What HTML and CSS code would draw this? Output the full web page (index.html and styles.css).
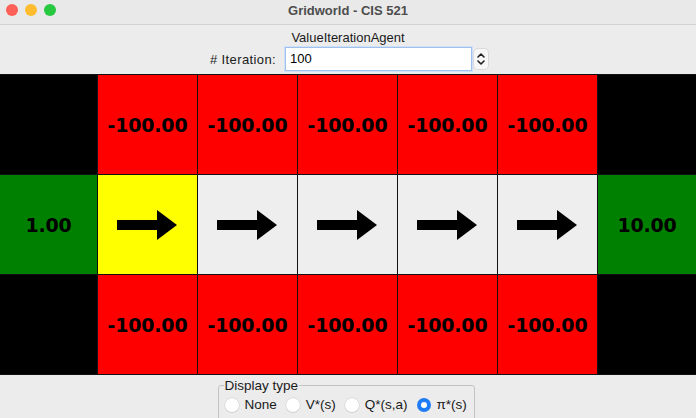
FILE: index.html
```html
<!DOCTYPE html>
<html>
<head>
<meta charset="utf-8">
<link rel="stylesheet" href="styles.css">
</head>
<body>
<div class="window">
  <div class="titlebar">
    <div class="lights">
      <span class="light red"></span>
      <span class="light yellow"></span>
      <span class="light green"></span>
    </div>
    <div class="title">Gridworld - CIS 521</div>
  </div>
  <div class="header">
    <div class="agent">ValueIterationAgent</div>
    <div class="iter-row">
      <label class="iter-label"># Iteration:</label>
      <div class="iter-input">100</div>
      <div class="spinner">
        <svg width="14" height="20" viewBox="0 0 14 20">
          <path d="M4 8 L7 5 L10 8" fill="none" stroke="#222" stroke-width="1.6" stroke-linecap="round" stroke-linejoin="round"/>
          <path d="M4 12 L7 15 L10 12" fill="none" stroke="#222" stroke-width="1.6" stroke-linecap="round" stroke-linejoin="round"/>
        </svg>
      </div>
    </div>
  </div>
  <div class="grid">
    <div class="cell black first"></div>
    <div class="cell red">-100.00</div>
    <div class="cell red">-100.00</div>
    <div class="cell red">-100.00</div>
    <div class="cell red">-100.00</div>
    <div class="cell red">-100.00</div>
    <div class="cell black"></div>

    <div class="cell green first">1.00</div>
    <div class="cell yellow"><svg class="arrow" width="60" height="30" viewBox="0 0 60 30"><path d="M0 10 H40 V0 L60 15 L40 30 V20 H0 Z" fill="#000"/></svg></div>
    <div class="cell grey"><svg class="arrow" width="60" height="30" viewBox="0 0 60 30"><path d="M0 10 H40 V0 L60 15 L40 30 V20 H0 Z" fill="#000"/></svg></div>
    <div class="cell grey"><svg class="arrow" width="60" height="30" viewBox="0 0 60 30"><path d="M0 10 H40 V0 L60 15 L40 30 V20 H0 Z" fill="#000"/></svg></div>
    <div class="cell grey"><svg class="arrow" width="60" height="30" viewBox="0 0 60 30"><path d="M0 10 H40 V0 L60 15 L40 30 V20 H0 Z" fill="#000"/></svg></div>
    <div class="cell grey"><svg class="arrow" width="60" height="30" viewBox="0 0 60 30"><path d="M0 10 H40 V0 L60 15 L40 30 V20 H0 Z" fill="#000"/></svg></div>
    <div class="cell green">10.00</div>

    <div class="cell black first"></div>
    <div class="cell red">-100.00</div>
    <div class="cell red">-100.00</div>
    <div class="cell red">-100.00</div>
    <div class="cell red">-100.00</div>
    <div class="cell red">-100.00</div>
    <div class="cell black"></div>
  </div>
  <div class="footer">
    <fieldset class="display">
      <legend>Display type</legend>
      <div class="radios">
        <span class="radio"><span class="dot"></span>None</span>
        <span class="radio"><span class="dot"></span>V*(s)</span>
        <span class="radio"><span class="dot"></span>Q*(s,a)</span>
        <span class="radio"><span class="dot on"></span>π*(s)</span>
      </div>
    </fieldset>
  </div>
</div>
</body>
</html>
```
FILE: styles.css
```css
* { box-sizing: border-box; }
html, body { margin: 0; padding: 0; }
body {
  width: 696px;
  height: 418px;
  overflow: hidden;
  background: #ececec;
  font-family: "Liberation Sans", Arial, sans-serif;
  color: #000;
}
.window { width: 696px; height: 418px; display: flex; flex-direction: column; }
.window > * { flex-shrink: 0; }
.titlebar {
  height: 25px;
  position: relative;
  background: #e9e9e9;
  border-bottom: 1px solid #d2d2d2;
  display: flex;
  align-items: center;
  justify-content: center;
}
.lights {
  position: absolute;
  left: 6px;
  top: 4px;
  display: flex;
  gap: 7px;
}
.light { width: 12px; height: 12px; border-radius: 50%; display: block; }
.light.red { background: #fe5f57; }
.light.yellow { background: #febc2e; }
.light.green { background: #28c840; }
.title {
  font-weight: bold;
  font-size: 13px;
  color: #4d4d4d;
  margin-top: -3px;
}
.header {
  height: 49px;
  display: flex;
  flex-direction: column;
  align-items: center;
}
.agent {
  font-size: 13px;
  margin-top: 4px;
  height: 17px;
  line-height: 17px;
  color: #1a1a1a;
}
.iter-row {
  display: flex;
  align-items: center;
  margin-top: 1px;
  margin-left: 2px;
  height: 24px;
}
.iter-label { font-size: 13px; color: #1a1a1a; margin-right: 9px; letter-spacing: 0.4px; }
.iter-input {
  width: 187px;
  height: 24px;
  background: #fff;
  border: 1px solid #9fc1ee;
  box-shadow: 0 0 0 1px #cfe0f7;
  font-size: 13px;
  line-height: 22px;
  padding-left: 4px;
}
.spinner {
  margin-left: 2px;
  width: 14px;
  height: 20px;
  background: #f7f7f7;
  border-radius: 4px;
  box-shadow: 0 0 0 1px #dadada;
  display: flex;
}
.grid {
  display: grid;
  grid-template-columns: 97px repeat(5, 100px) 99px;
  grid-template-rows: repeat(3, 100px);
  border-bottom: 1px solid #111;
}
.cell {
  border-top: 1px solid #111;
  border-left: 1px solid #111;
  display: flex;
  align-items: center;
  justify-content: center;
  font-family: "DejaVu Sans", sans-serif;
  font-weight: bold;
  font-size: 19px;
  letter-spacing: -0.2px;
}
.cell.first { border-left: none; }
.black { background: #000; }
.red { background: #ff0000; }
.green { background: #008000; }
.yellow { background: #ffff00; }
.grey { background: #eeeeee; }
.arrow { display: block; margin-left: -2px; }
.footer {
  flex: 1;
  display: flex;
  justify-content: center;
}
.display {
  margin: 3px 0 0 -4px;
  padding: 0 2px 0 6px;
  width: 257px;
  height: 60px;
  border: 1px solid #c3c3c3;
  border-radius: 3px;
}
.display legend {
  font-size: 13.5px;
  padding: 0 1px;
  margin-left: -1px;
  color: #1a1a1a;
}
.radios { display: flex; gap: 9px; margin-top: 4px; white-space: nowrap; }
.radio {
  display: flex;
  align-items: center;
  font-size: 13.5px;
  color: #1a1a1a;
  gap: 6px;
  white-space: nowrap;
}
.dot {
  width: 14px;
  height: 14px;
  border-radius: 50%;
  background: #fff;
  box-shadow: 0 0 0 0.5px #c8c8c8, 0 1px 1px rgba(0,0,0,0.08);
  display: block;
  flex-shrink: 0;
}
.dot.on {
  background: #fff;
  border: 4.5px solid #1f7cf5;
  box-shadow: none;
}
```
